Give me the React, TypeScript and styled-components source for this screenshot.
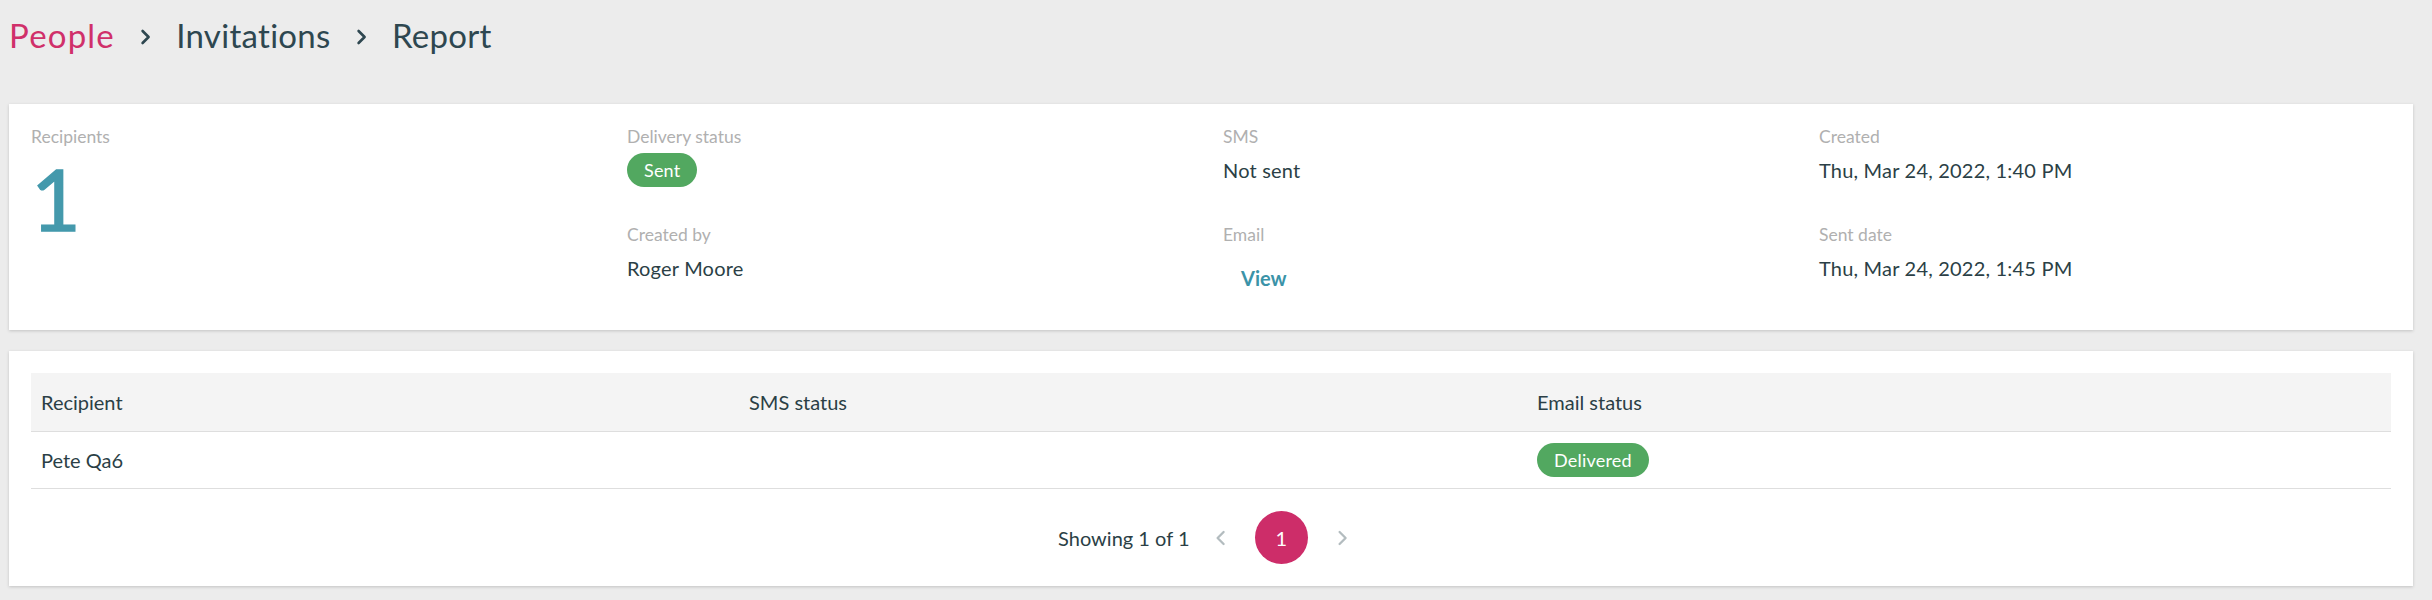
import React from 'react';
import styled, { createGlobalStyle } from 'styled-components';

const GlobalStyle = createGlobalStyle`
  html, body {
    margin: 0;
    padding: 0;
    background: #ececec;
  }
  body {
    font-family: "Lato", "Open Sans", sans-serif;
    color: #2b3f46;
  }
`;

const Page = styled.main`
  padding: 15px 19px 17px 9px;
`;

const Breadcrumbs = styled.nav`
  display: flex;
  align-items: center;
  gap: 25px;
  height: 40px;
  font-size: 33px;
  line-height: 40px;
  margin-bottom: 49px;
`;

const Crumb = styled.span<{ $link?: boolean }>`
  color: ${p => (p.$link ? '#d0306a' : '#2e4750')};
  letter-spacing: ${p => (p.$link ? '1.2px' : '0.3px')};
`;

const CrumbSep = styled.span`
  display: flex;
  align-items: center;
  color: #2e4750;
  margin-top: 4px;
`;

const Card = styled.section`
  background: #fff;
  box-shadow: 0 1px 3px rgba(0, 0, 0, 0.18);
  padding: 22px;
  & + & {
    margin-top: 21px;
  }
`;

const InfoGrid = styled.div`
  display: grid;
  grid-template-columns: repeat(4, 1fr);
  column-gap: 24px;
`;

const Column = styled.div`
  display: flex;
  flex-direction: column;
  gap: 37px;
`;

const Field = styled.div`
  display: flex;
  flex-direction: column;
  align-items: flex-start;
  gap: 5px;
`;

const Label = styled.div`
  font-size: 17.5px;
  line-height: 22px;
  color: #b0b0b0;
`;

const Value = styled.div`
  font-size: 20px;
  line-height: 34px;
  letter-spacing: 0.2px;
  color: #2b3f46;
`;

const BigNumber = styled.div`
  font-size: 86px;
  line-height: 90px;
  font-weight: 400;
  color: #4499ac;
  -webkit-text-stroke: 1.4px #4499ac;
`;

const Badge = styled.span`
  display: inline-block;
  height: 34px;
  line-height: 34px;
  padding: 0 17px;
  border-radius: 17px;
  background: #52a860;
  color: #fff;
  font-size: 18px;
  letter-spacing: 0.2px;
`;

const ViewButton = styled.button`
  border: none;
  background: none;
  padding: 10px 18px 13px;
  font-family: inherit;
  font-size: 20px;
  line-height: 34px;
  font-weight: 700;
  color: #3b93a8;
  cursor: pointer;
`;

const Table = styled.div`
  display: flex;
  flex-direction: column;
`;

const Row = styled.div<{ $head?: boolean }>`
  display: grid;
  grid-template-columns: 708px 788px 1fr;
  align-items: center;
  height: ${p => (p.$head ? '58px' : '56px')};
  background: ${p => (p.$head ? '#f4f4f4' : '#fff')};
  border-bottom: 1px solid #dedede;
`;

const Cell = styled.div`
  padding: 0 10px;
  font-size: 20px;
  color: #2b3f46;
`;

const Pagination = styled.div`
  display: flex;
  justify-content: center;
  align-items: center;
  padding: 22px 16px 0 0;
  font-size: 20px;
  color: #2b3f46;
`;

const Showing = styled.span`
  margin-right: 25px;
`;

const Arrow = styled.button`
  border: none;
  background: none;
  padding: 0;
  display: flex;
  align-items: center;
  color: #b3bcbf;
  cursor: pointer;
`;

const PageDot = styled.button`
  width: 53px;
  height: 53px;
  margin: 0 29px;
  border: none;
  border-radius: 50%;
  background: #cd2d69;
  color: #fff;
  font-family: inherit;
  font-size: 20px;
  cursor: pointer;
`;

const Chevron = ({ dir, size, stroke }: { dir: 'left' | 'right'; size: number; stroke: number }) => (
  <svg width={size * 0.7} height={size} viewBox="0 0 11 16" fill="none">
    <path
      d={dir === 'right' ? 'M2.5 2 L8.5 8 L2.5 14' : 'M8.5 2 L2.5 8 L8.5 14'}
      stroke="currentColor"
      strokeWidth={stroke}
      strokeLinecap="round"
      strokeLinejoin="round"
    />
  </svg>
);

export default function App() {
  return (
    <>
      <GlobalStyle />
      <Page>
        <Breadcrumbs>
          <Crumb $link>People</Crumb>
          <CrumbSep><Chevron dir="right" size={16} stroke={2.6} /></CrumbSep>
          <Crumb>Invitations</Crumb>
          <CrumbSep><Chevron dir="right" size={16} stroke={2.6} /></CrumbSep>
          <Crumb>Report</Crumb>
        </Breadcrumbs>

        <Card>
          <InfoGrid>
            <Column>
              <Field>
                <Label>Recipients</Label>
                <BigNumber>1</BigNumber>
              </Field>
            </Column>
            <Column>
              <Field>
                <Label>Delivery status</Label>
                <Badge>Sent</Badge>
              </Field>
              <Field>
                <Label>Created by</Label>
                <Value>Roger Moore</Value>
              </Field>
            </Column>
            <Column>
              <Field>
                <Label>SMS</Label>
                <Value>Not sent</Value>
              </Field>
              <Field>
                <Label>Email</Label>
                <ViewButton>View</ViewButton>
              </Field>
            </Column>
            <Column>
              <Field>
                <Label>Created</Label>
                <Value>Thu, Mar 24, 2022, 1:40 PM</Value>
              </Field>
              <Field>
                <Label>Sent date</Label>
                <Value>Thu, Mar 24, 2022, 1:45 PM</Value>
              </Field>
            </Column>
          </InfoGrid>
        </Card>

        <Card>
          <Table role="table">
            <Row $head role="row">
              <Cell role="columnheader">Recipient</Cell>
              <Cell role="columnheader">SMS status</Cell>
              <Cell role="columnheader">Email status</Cell>
            </Row>
            <Row role="row">
              <Cell role="cell">Pete Qa6</Cell>
              <Cell role="cell"></Cell>
              <Cell role="cell"><Badge>Delivered</Badge></Cell>
            </Row>
          </Table>
          <Pagination>
            <Showing>Showing 1 of 1</Showing>
            <Arrow aria-label="Previous"><Chevron dir="left" size={16} stroke={2.3} /></Arrow>
            <PageDot>1</PageDot>
            <Arrow aria-label="Next"><Chevron dir="right" size={16} stroke={2.3} /></Arrow>
          </Pagination>
        </Card>
      </Page>
    </>
  );
}
